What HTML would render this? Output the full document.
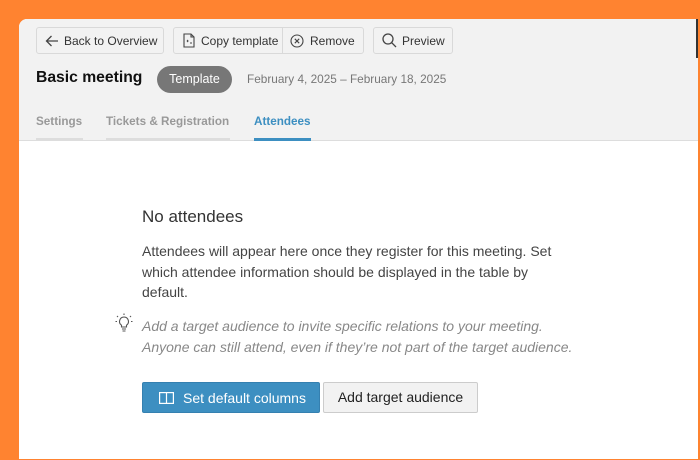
<!DOCTYPE html>
<html><head><style>
*{box-sizing:border-box;margin:0;padding:0}
body{width:700px;height:460px;background:#ff8330;font-family:"Liberation Sans",sans-serif;position:relative;overflow:hidden}
.panel{position:absolute;left:19px;top:19px;width:679px;height:440px;background:#fff;border-top-left-radius:8px;overflow:hidden}
.head{position:absolute;left:0;top:0;width:100%;height:122px;background:#f2f2f2;border-bottom:1px solid #ddd}
.btn{position:absolute;top:8px;height:27px;border:1px solid #d9d9d9;border-radius:3px;background:#f2f2f2;font-size:12px;color:#333;display:flex;align-items:center;padding-left:8px;gap:5px;white-space:nowrap}
.btn svg{flex:none}
.abs{position:absolute;white-space:nowrap}
.tab{position:absolute;top:96px;font-size:11.7px;font-weight:bold;color:#999}
.ul{position:absolute;top:119px;height:3px;background:#ddd}
</style></head><body>
<div class="panel">
<div class="head">
 <div class="btn" style="left:17px;width:128px"><svg width="14" height="14" viewBox="0 0 14 14" fill="none" stroke="#444" stroke-width="1.3"><path d="M13 7H1.5M6.5 2L1.5 7l5 5"/></svg>Back to Overview</div>
 <div class="btn" style="left:154px;width:191px"><svg width="14" height="15" viewBox="0 0 14 15" fill="none" stroke="#444" stroke-width="1.1"><path d="M2 1h7l3 3v10H2z M9 1v3h3"/><path d="M5 7l1 1-1 1 M8 10h2"/></svg>Copy template<span style="position:absolute;left:108px;top:0;height:25px;border-left:1px solid #d9d9d9"></span><span style="position:absolute;left:116px;top:0;height:25px;display:flex;gap:6px;align-items:center"><svg width="14" height="14" viewBox="0 0 14 14" fill="none" stroke="#444" stroke-width="1.1"><circle cx="7" cy="7" r="6"/><path d="M4.8 4.8l4.4 4.4M9.2 4.8l-4.4 4.4"/></svg>Remove</span></div>
 <div class="btn" style="left:354px;width:80px"><svg width="15" height="15" viewBox="0 0 15 15" fill="none" stroke="#444" stroke-width="1.3"><circle cx="6" cy="6" r="5"/><path d="M9.7 9.7L14 14"/></svg>Preview</div>
 <div class="abs" style="left:17px;top:50px;font-size:15.7px;font-weight:bold;color:#111">Basic meeting</div>
 <div class="abs" style="left:138px;top:47px;width:75px;height:27px;border-radius:14px;background:#777;color:#fff;font-size:12.5px;text-align:center;line-height:27px">Template</div>
 <div class="abs" style="left:228px;top:53px;font-size:11.8px;color:#777">February 4, 2025 – February 18, 2025</div>
 <div class="tab" style="left:17px">Settings</div><div class="ul" style="left:17px;width:47px"></div>
 <div class="tab" style="left:87px">Tickets &amp; Registration</div><div class="ul" style="left:87px;width:124px"></div>
 <div class="tab" style="left:235px;color:#3d8fc1">Attendees</div><div class="ul" style="left:235px;width:57px;background:#3d8fc1"></div>
</div>
<div style="position:absolute;right:0;top:0;width:2px;height:39px;background:#333"></div>
<div class="abs" style="left:123px;top:188px;font-size:17px;color:#333">No attendees</div>
<div class="abs" style="left:123px;top:222px;font-size:14px;color:#444;line-height:20.5px;white-space:normal;width:430px">Attendees will appear here once they register for this meeting. Set which attendee information should be displayed in the table by default.</div>
<svg class="abs" style="left:96px;top:294px" width="18" height="20" viewBox="0 0 18 20" fill="none" stroke="#555" stroke-width="1.1"><path d="M9 4a4.5 4.5 0 0 0-2.5 8.2V14h5v-1.8A4.5 4.5 0 0 0 9 4z M7 16h4 M7.5 18h3 M9 0.5v1.5 M2 3l1 1 M16 3l-1 1 M0.5 8.5h1.5 M16 8.5h1.5"/></svg>
<div class="abs" style="left:123px;top:297px;font-size:14px;color:#888;font-style:italic;line-height:20.5px">Add a target audience to invite specific relations to your meeting.<br>Anyone can still attend, even if they’re not part of the target audience.</div>
<div class="abs" style="left:123px;top:363px;width:178px;height:31px;background:#3d8fc1;border:1px solid #3580b0;border-radius:2px;color:#fff;font-size:14px;display:flex;align-items:center;padding-left:16px;gap:9px"><svg width="15" height="12" viewBox="0 0 15 12" fill="none" stroke="#fff" stroke-width="1.2"><rect x="0.6" y="0.6" width="13.8" height="10.8"/><path d="M7.5 0.6v10.8"/></svg>Set default columns</div>
<div class="abs" style="left:304px;top:363px;width:155px;height:31px;background:#f2f2f2;border:1px solid #ccc;border-radius:2px;color:#222;font-size:14px;text-align:center;line-height:29px">Add target audience</div>
</div>
</body></html>
